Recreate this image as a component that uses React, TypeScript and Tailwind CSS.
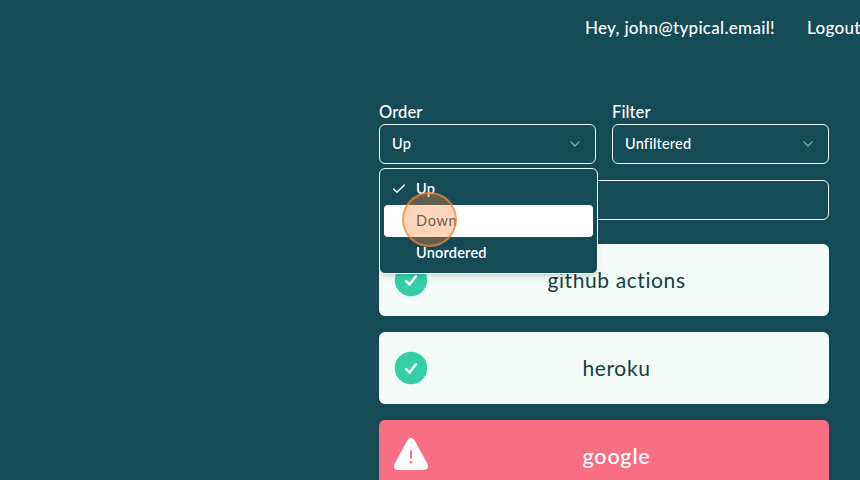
import { Check, ChevronDown } from "lucide-react";

function CheckBadge() {
  return (
    <svg className="h-9 w-9 shrink-0" viewBox="0 0 36 36" fill="none">
      <circle cx="18" cy="18" r="16.2" fill="#34cfa7" />
      <path d="M13.1 19 16.5 22.6 22.9 14.2" stroke="#fff" strokeWidth="2.5" strokeLinecap="round" strokeLinejoin="round" />
    </svg>
  );
}

function WarningBadge() {
  return (
    <svg className="h-9 w-9 shrink-0" viewBox="0 0 36 36" fill="none">
      <path d="M18 4.2 31 28H5Z" fill="#fff" stroke="#fff" strokeWidth="8" strokeLinejoin="round" />
      <path d="M18 13v6.8" stroke="#fb6f85" strokeWidth="2" strokeLinecap="round" />
      <circle cx="18" cy="24.2" r="1.3" fill="#fb6f85" />
    </svg>
  );
}

function Select({ label, value }: { label: string; value: string }) {
  return (
    <div className="w-[217px]">
      <div className="h-6 text-[16.5px] leading-6 font-medium tracking-[0.1px]">{label}</div>
      <div className="flex h-10 items-center justify-between rounded-md border border-[#eefafa] px-3 text-[14.5px] font-medium tracking-[0.2px]">
        <span>{value}</span>
        <ChevronDown className="h-4 w-4 opacity-50" />
      </div>
    </div>
  );
}

export default function App() {
  return (
    <div className="relative h-[480px] w-[860px] overflow-hidden bg-[#154b57] font-['Lato','Noto_Sans',sans-serif] text-white">
      <header className="flex h-14 gap-8 pl-[585px] text-[17px] leading-[55px] font-medium tracking-[0.3px] whitespace-nowrap">
        <span className="w-[190px] shrink-0">Hey, john@typical.email!</span>
        <span className="shrink-0">Logout</span>
      </header>
      <main className="relative ml-[379px] flex w-[450px] flex-col gap-4 pt-11">
        <div className="flex gap-4">
          <Select label="Order" value="Up" />
          <Select label="Filter" value="Unfiltered" />
        </div>
        <div className="h-10 rounded-md border border-[#eefafa]" />
        <div className="mt-2 flex h-[72px] items-center rounded-md bg-[#f3fcf9] px-[14px] text-[21px]">
          <CheckBadge />
          <span className="flex-1 pr-[11px] text-center tracking-[0.6px] text-[#153f43]">github actions</span>
        </div>
        <div className="flex h-[72px] items-center rounded-md bg-[#f3fcf9] px-[14px] text-[21px]">
          <CheckBadge />
          <span className="flex-1 pr-[11px] text-center tracking-[0.65px] text-[#153f43]">heroku</span>
        </div>
        <div className="flex h-[72px] items-center rounded-md bg-[#fb6f85] px-[14px] text-[21.5px] font-medium">
          <WarningBadge />
          <span className="flex-1 pr-[11px] text-center tracking-[0.8px]">google</span>
        </div>
        <div className="absolute top-28 left-0 flex h-[106px] w-[219px] flex-col rounded-md border border-[#eefafa] bg-[#154b57] p-1 text-[14.5px] shadow-md">
          <div className="flex h-8 items-center pl-[7px] font-semibold tracking-[0.25px]">
            <Check className="mr-[9px] h-4 w-4" />
            <span>Up</span>
          </div>
          <div className="flex h-8 items-center rounded-sm bg-white pl-8 tracking-[0.7px] text-[#154b57]">Down</div>
          <div className="flex h-8 items-center pl-8 font-semibold tracking-[0.2px]">Unordered</div>
        </div>
        <div className="absolute top-[136px] left-[23px] h-[55px] w-[55px] rounded-full border-2 border-[#ef852f]/70 bg-[#f9883c]/35" />
      </main>
    </div>
  );
}
